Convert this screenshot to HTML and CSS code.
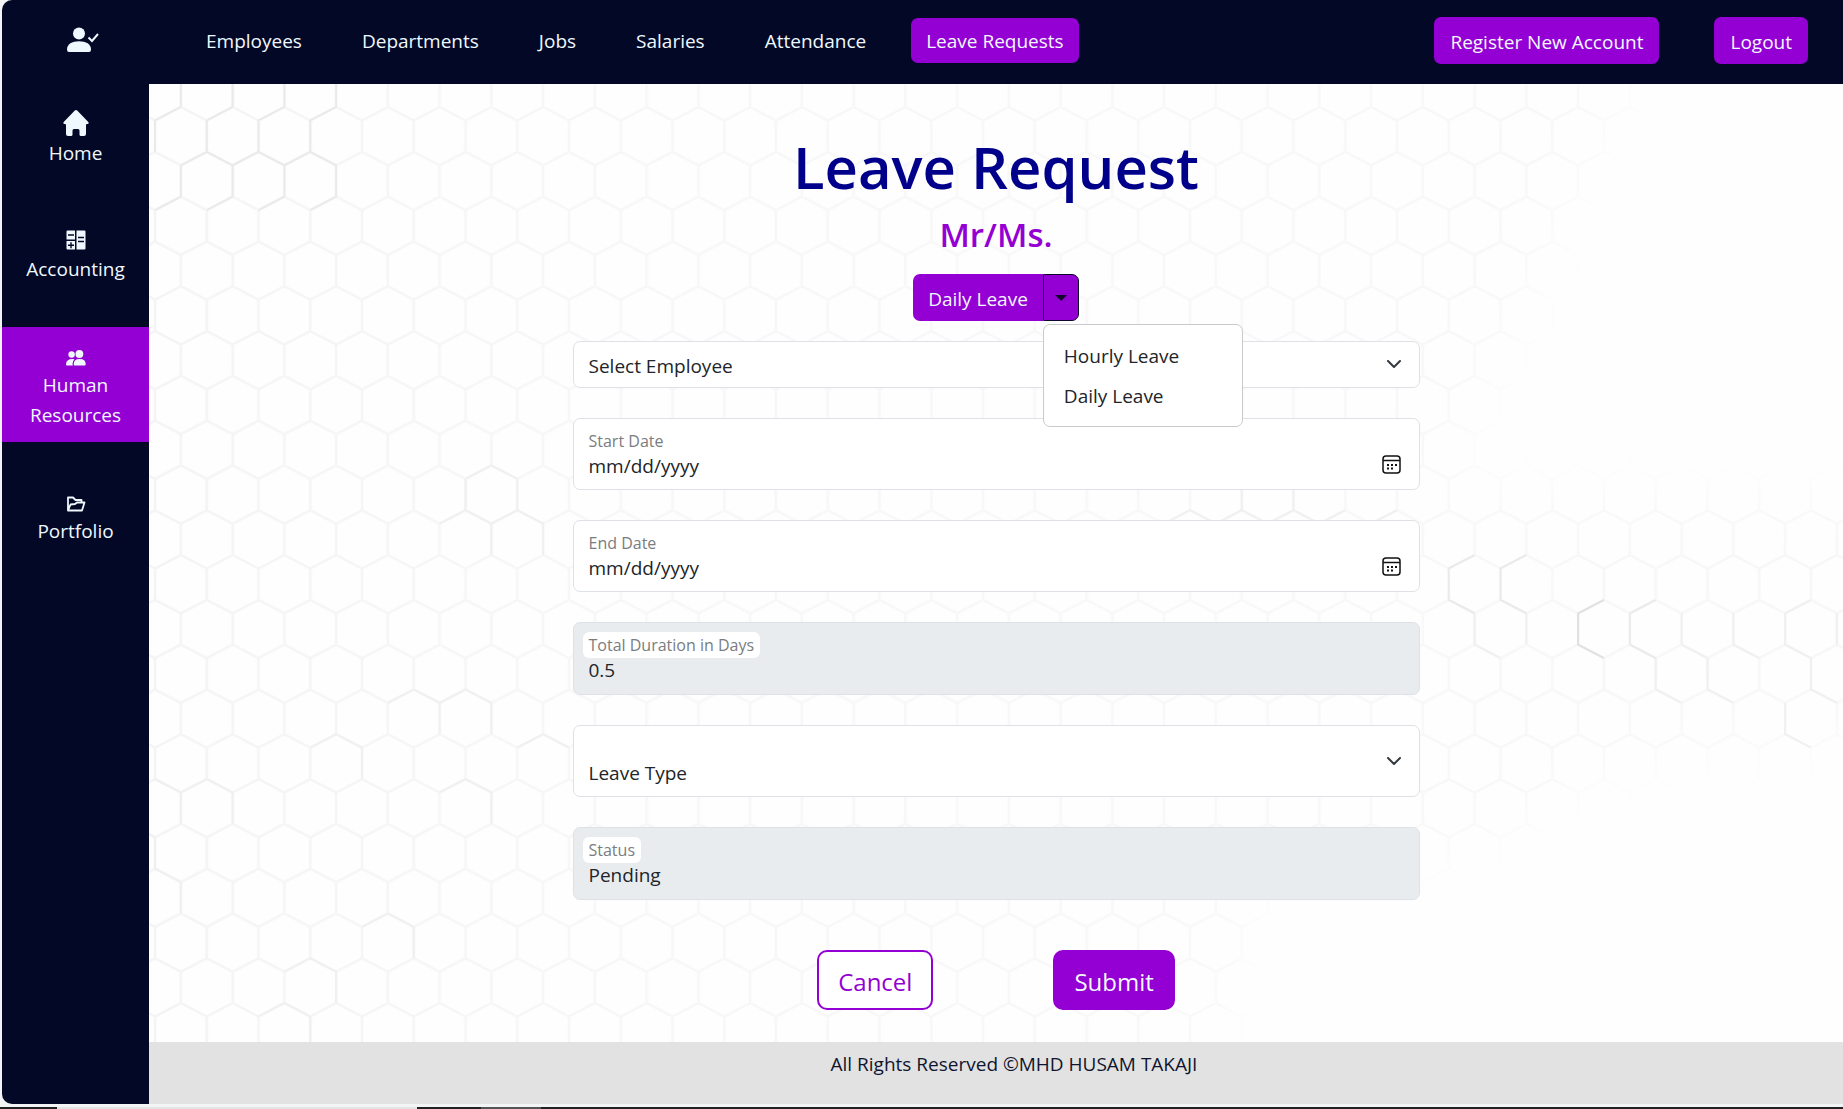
FILE: index.html
```html
<!DOCTYPE html>
<html lang="en">
<head>
<meta charset="utf-8">
<meta name="viewport" content="width=device-width, initial-scale=1">
<title>Leave Request</title>
<link rel="stylesheet" href="styles.css">
</head>
<body>
<div class="app">
  <header class="topbar">
    <a class="brand" href="#" aria-label="Profile">
      <svg width="32" height="26" viewBox="0 0 32 26" fill="currentColor"><circle cx="12" cy="6.500" r="6"/><path d="M0 22.500C0 17 5 14.200 12 14.200S24 17 24 22.500Q24 25 22 25H2Q0 25 0 22.500Z"/><path d="M21.500 10.500l3.500 3.500 6-7" fill="none" stroke="currentColor" stroke-width="2"/></svg>
    </a>
    <nav class="topnav" aria-label="Human resources">
      <a class="toplink" href="#">Employees</a>
      <a class="toplink" href="#">Departments</a>
      <a class="toplink" href="#">Jobs</a>
      <a class="toplink" href="#">Salaries</a>
      <a class="toplink" href="#">Attendance</a>
      <a class="toplink toplink-active" href="#">Leave Requests</a>
    </nav>
    <div class="account">
      <button class="btn" type="button">Register New Account</button>
      <button class="btn" type="button">Logout</button>
    </div>
  </header>

  <div class="body">
    <nav class="sidebar" aria-label="Sections">
      <a class="side-item" href="#">
        <span class="side-icon side-icon-large"><svg width="26" height="26" viewBox="0 0 26 26" fill="currentColor"><path d="M11.800.6Q13-.4 14.200.6L25.300 12Q26 13 25.200 13.800 24.600 14.300 23 14.200V24Q23 26 21 26H18Q16.500 26 16.500 24.500V20.500Q16.500 19 15 19H11Q9.500 19 9.500 20.500V24.500Q9.500 26 8 26H5Q3 26 3 24V14.200Q1.400 14.300.8 13.800 0 13 .7 12Z"/></svg></span>
        Home
      </a>
      <a class="side-item" href="#">
        <span class="side-icon"><svg width="20" height="20" viewBox="0 0 20 20"><path fill="currentColor" d="M1.500.5H9v9H.5v-8q0-1 1-1zM10.500.5H18.500q1 0 1 1v17q0 1-1 1H10.500zM.5 11H9v8.500H1.500q-1 0-1-1z"/><path stroke="#020826" stroke-width="1.400" d="M2 5h6M12 7.500h6M12 11.500h6M2 15.200h6M5 12.300v6"/></svg></span>
        Accounting
      </a>
      <a class="side-item side-item-active" href="#">
        <span class="side-icon"><svg width="20" height="16" viewBox="0 0 20 16" fill="currentColor"><circle cx="5.600" cy="4.500" r="3.200"/><circle cx="13.400" cy="4" r="3.900"/><path d="M7 15.500H1Q0 15.500 0 14.500 0 9 6.500 9q1 0 2 .3Q6.500 11 6.500 14q0 1 .5 1.500zM8.700 15.500q-1 0-1-1.200 0-5.300 6-5.300t6 5.300q0 1.200-1 1.200z"/></svg></span>
        Human Resources
      </a>
      <a class="side-item" href="#">
        <span class="side-icon"><svg width="20" height="16" viewBox="0 0 20 16" fill="none" stroke="currentColor" stroke-width="1.800" stroke-linejoin="round"><path d="M2 14.500V1.500H7L9.500 4H15.500V6.500M2 14.500L4.500 8.500 9 8 11 6.500H18.500L16 14.500Z"/></svg></span>
        Portfolio
      </a>
    </nav>

    <div class="content">
      <svg class="honeycomb" viewBox="149 84 1694 1020" preserveAspectRatio="xMinYMin slice" aria-hidden="true">
        <defs>
          <pattern id="cells" x="155" y="107" width="51.750" height="89.600" patternUnits="userSpaceOnUse">
            <path d="M0 13.600L25.875 0 51.750 13.600M0 13.600V44.800L25.875 58.400 51.750 44.800V13.600M25.875 58.400V89.600" fill="none" stroke="#f4f4f5" stroke-width="2.500"/>
          </pattern>
          <linearGradient id="fade" x1="149" x2="1843" y1="0" y2="0" gradientUnits="userSpaceOnUse">
            <stop offset="0" stop-color="#fff"/><stop offset=".25" stop-color="#bbb"/><stop offset=".6" stop-color="#999"/><stop offset="1" stop-color="#bbb"/>
          </linearGradient>
          <filter id="soft"><feGaussianBlur stdDeviation="30"/></filter>
          <mask id="spread" maskUnits="userSpaceOnUse" x="149" y="84" width="1694" height="1025">
            <path filter="url(#soft)" fill="url(#fade)" d="M50 0H1650L1520 300 1430 490 1900 510V720L1600 760 1480 840 1250 880 1180 1180H50Z"/>
          </mask>
        </defs>
        <rect x="149" y="84" width="1694" height="1025" fill="url(#cells)" mask="url(#spread)"/>
        <g transform="translate(155 107) scale(25.875 44.800)" fill="none">
          <path class="edge edge-mid" d="M1-.7V0L0 .3V1M3-.7V0L2 .3V1L3 1.300V2L2 2.300M5-.7V0L4 .3V1L5 1.300V2L4 2.300M7-.7V0L6 .3V1L7 1.300V2L6 2.300M2 1L1 1.300V2L0 2.300M4 1L3 1.300M6 1L5 1.300"/>
          <path class="edge edge-light" d="M12 8.300L13 8 14 8.300V9L15 9.300V10M12 8.300V9L11 9.300M12 9L13 9.300V10M13 9.300L14 9M9 13.300L10 13 11 13.300V14M11 13.300L12 13 13 13.300V14M6 14.300L7 14 8 14.300V15M14 14.300L15 14 16 14.300M1 15.300L2 15 3 15.300V16M0 15L1 15.300V16M11 15.300L12 15 13 15.300V16M-1 16L0 16.300V17L1 17.300V18M8 18.300L9 18 10 18.300V19M5 19.300L6 19 7 19.300V20M4 20.300L5 20 6 20.300V21"/>
          <path class="edge edge-light" d="M39 9.300L40 9 41 9.300 42 9V8.300M42 9L43 9.300 44 9 45 9.300 46 9M44 9V8.300M47 9.300L48 9M59 11.300V12L60 12.300V13L61 13.300M61 11.300V12L62 12.300M64 11L63 11.300V12L64 12.300V13L65 13.300M65 11.300V12M58 12.300V13L59 13.300M63 13.300V14L64 14.300M51 11.300V12L52 12.300M53 11.300V12"/>
          <path class="edge edge-mid" d="M51 10L50 10.300V11L51 11.300M53 10L52 10.300V11L53 11.300M58 11L57 11.300V12L58 12.300"/>
          <path class="edge edge-dark" d="M56 11L55 11.300V12L56 12.300"/>
        </g>
      </svg>

      <main class="main">
        <h1 class="title">Leave Request</h1>
        <h2 class="subtitle">Mr/Ms.</h2>
        <div class="split">
          <button class="btn split-main" type="button">Daily Leave</button>
          <button class="split-toggle" type="button" aria-label="Choose leave kind" aria-expanded="true"><span class="caret"></span></button>
          <div class="menu">
            <a class="menu-item" href="#">Hourly Leave</a>
            <a class="menu-item" href="#">Daily Leave</a>
          </div>
        </div>

        <form class="form">
          <select class="select" aria-label="Employee"><option>Select Employee</option></select>
          <div class="field">
            <label class="label" for="start">Start Date</label>
            <input class="value" id="start" type="date">
          </div>
          <div class="field">
            <label class="label" for="end">End Date</label>
            <input class="value" id="end" type="date">
          </div>
          <div class="field field-readonly">
            <label class="label" for="total">Total Duration in Days</label>
            <input class="value" id="total" type="text" value="0.5" readonly>
          </div>
          <select class="select select-tall" aria-label="Leave type"><option>Leave Type</option></select>
          <div class="field field-readonly">
            <label class="label" for="status">Status</label>
            <input class="value" id="status" type="text" value="Pending" readonly>
          </div>
          <div class="actions">
            <button class="action action-outline" type="button">Cancel</button>
            <button class="action action-fill" type="submit">Submit</button>
          </div>
        </form>
      </main>
      <footer class="footer">All Rights Reserved ©MHD HUSAM TAKAJI</footer>
    </div>
  </div>
</div>
<div class="taskbar"></div>
</body>
</html>
```
FILE: styles.css
```css
:root {
  --navy: #020826;
  --violet: #9400d3;
  --ice: #f0f8ff;
  --line: #dee2e6;
}

* { box-sizing: border-box; }

body {
  margin: 0;
  min-height: 100vh;
  display: flex;
  flex-direction: column;
  background: #f3f4f6;
  color: #212529;
  font: 19px/30px "Open Sans", "Noto Sans", sans-serif;
}

a { color: inherit; text-decoration: none; }
button, input, select { font: inherit; color: inherit; }

.app {
  flex: 1;
  display: flex;
  flex-direction: column;
  margin: 0 0 3px 2px;
  border-radius: 10px 0 0 10px;
  overflow: hidden;
  background: var(--navy);
}

.topbar {
  display: flex;
  align-items: center;
  height: 84px;
  padding: 0 35px 3px 0;
  color: var(--ice);
}
.brand {
  width: 147px;
  display: flex;
  justify-content: center;
  padding: 0 0 2px 14px;
}
.topnav { display: flex; gap: 30px; padding-left: 42px; }
.toplink { padding: 8px 15px 7px; border-radius: 7px; }
.toplink-active { background: var(--violet); }
.account { display: flex; gap: 55px; margin-left: auto; }
.btn {
  height: 47px;
  padding: 2px 16px 0;
  border: 0;
  border-radius: 7px;
  background: var(--violet);
  color: var(--ice);
}

.body { flex: 1; display: flex; }
.sidebar {
  width: 147px;
  display: flex;
  flex-direction: column;
  gap: 31px;
  padding-top: 11px;
  color: var(--ice);
  text-align: center;
}
.side-item { padding: 15px 12px 12px; }
.side-item-active { background: var(--violet); }
.side-icon {
  display: flex;
  align-items: flex-end;
  justify-content: center;
  height: 28px;
  padding-bottom: 4px;
}
.side-icon-large { align-items: flex-start; padding: 0; }

.content {
  position: relative;
  flex: 1;
  display: flex;
  flex-direction: column;
  background: #fefefe;
}
.honeycomb {
  position: absolute;
  inset: 0;
  width: 100%;
  height: 100%;
}
.edge { stroke-width: 2px; vector-effect: non-scaling-stroke; }
.edge-light { stroke: #f0f0f1; }
.edge-mid { stroke: #eaeaeb; }
.edge-dark { stroke: #e0e0e1; }

.main {
  position: relative;
  flex: 1;
  display: flex;
  flex-direction: column;
  align-items: center;
  padding: 47px 0 30px;
}
.title {
  margin: 0;
  color: #00008b;
  font-size: 58px;
  line-height: 72px;
  font-weight: 600;
}
.subtitle {
  margin: 10px 0 17px;
  color: var(--violet);
  font-size: 33px;
  line-height: 44px;
  font-weight: 600;
}

.split { position: relative; display: flex; }
.split-main { padding: 2px 15px 0; border-radius: 7px 0 0 7px; }
.split-toggle {
  width: 36px;
  height: 47px;
  display: grid;
  place-items: center;
  padding: 0;
  border: 1px solid #10062c;
  border-radius: 0 7px 7px 0;
  background: var(--violet);
}
.caret {
  border: 6px solid transparent;
  border-top-color: #10062c;
  border-bottom: 0;
}
.menu {
  position: absolute;
  z-index: 2;
  top: 50px;
  left: calc(100% - 36px);
  width: 200px;
  padding: 11px 0 10px;
  border: 1px solid #c8cacd;
  border-radius: 7px;
  background: #fff;
}
.menu-item { display: block; padding: 5px 20px; }

.form {
  width: 50%;
  display: flex;
  flex-direction: column;
  gap: 30px;
  margin-top: 20px;
}
.select {
  width: 100%;
  height: 47px;
  padding: 2px 15px 0;
  border: 1px solid var(--line);
  border-radius: 7px;
  appearance: none;
  background: #fff url("data:image/svg+xml,%3Csvg xmlns='http://www.w3.org/2000/svg' width='14' height='9' fill='none' stroke='%23343a40' stroke-width='2' stroke-linecap='round' stroke-linejoin='round'%3E%3Cpath d='M1 1l6 6 6-6'/%3E%3C/svg%3E") no-repeat right 18px center;
}
.select-tall { height: 72px; padding-top: 23px; }
.field {
  height: 72px;
  display: flex;
  flex-direction: column;
  align-items: flex-start;
  padding: 9px;
  border: 1px solid var(--line);
  border-radius: 7px;
  background: #fff;
}
.field-readonly { height: 73px; background: #e9ecef; }
.label {
  padding: 0 6px;
  border-radius: 6px;
  background: #fff;
  color: #7a7d80;
  font-size: 16px;
  line-height: 26px;
}
.value {
  width: 100%;
  height: 24px;
  padding: 0 9px 0 6px;
  border: 0;
  background: none;
  line-height: 24px;
}
.value::-webkit-datetime-edit,
.value::-webkit-datetime-edit-fields-wrapper { padding: 0; }
.value::-webkit-datetime-edit-month-field,
.value::-webkit-datetime-edit-day-field,
.value::-webkit-datetime-edit-year-field { padding: 0; }
.value::-webkit-calendar-picker-indicator {
  width: 19px;
  height: 19px;
  margin: 0 0 4px;
  padding: 0;
  background: url("data:image/svg+xml,%3Csvg xmlns='http://www.w3.org/2000/svg' width='19' height='19' fill='none' stroke='%23111' stroke-width='1.500'%3E%3Crect x='1' y='1' width='17' height='17' rx='3'/%3E%3Cpath d='M1 5.500h17'/%3E%3Cpath stroke-width='2' d='M5 10h2m2 0h2m2 0h2M5 13.500h2m2 0h2'/%3E%3C/svg%3E") no-repeat center;
}

.actions {
  display: flex;
  justify-content: center;
  align-items: center;
  gap: 120px;
  margin-top: 20px;
}
.action {
  height: 60px;
  padding: 3px 19px 0;
  border: 2px solid var(--violet);
  border-radius: 10px;
  font-size: 24px;
}
.action-outline { background: #fff; color: var(--violet); }
.action-fill { background: var(--violet); color: var(--ice); }

.footer {
  position: relative;
  height: 62px;
  padding: 7px 0 0 36px;
  background: #e2e2e2;
  color: #10152f;
  text-align: center;
}

.taskbar {
  height: 2px;
  background: linear-gradient(90deg, #222 57px, #e4e4e4 57px 417px, #222 417px 481px, #555 481px 541px, #222 541px);
}
```
